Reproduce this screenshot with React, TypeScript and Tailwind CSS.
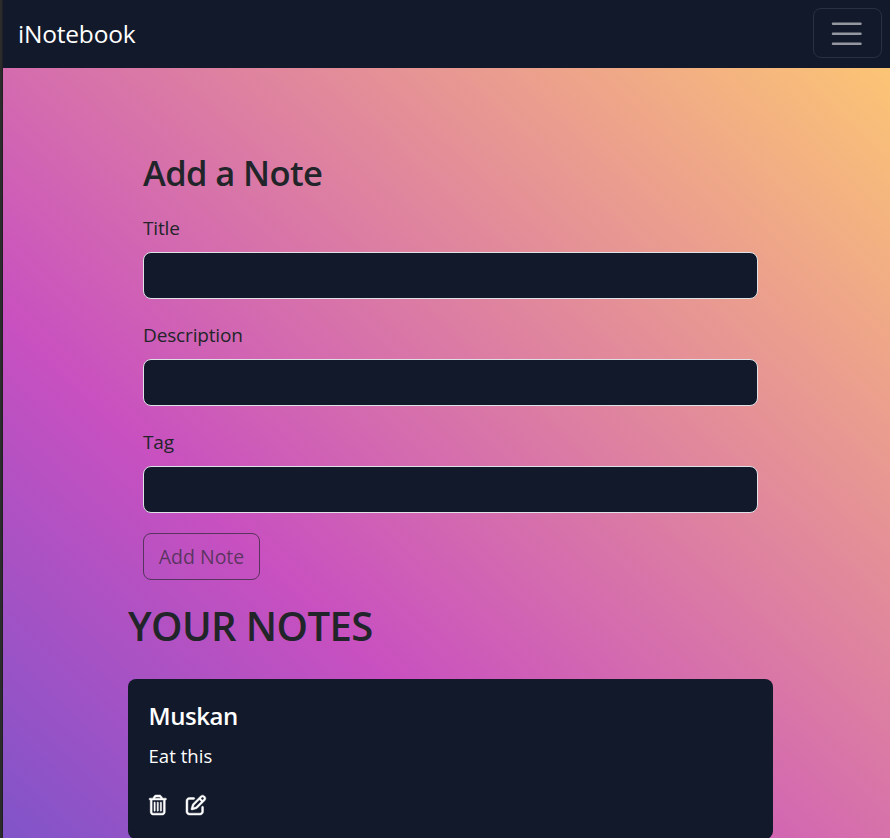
import { FaRegPenToSquare, FaRegTrashCan } from "react-icons/fa6";

function Navbar() {
  return (
    <nav className="flex h-[68px] items-start justify-between bg-[#12192b] pt-2 pr-2 pl-[15px]">
      <a className="mt-[7px] text-[24.5px] leading-[38px] tracking-[-0.2px] text-white">iNotebook</a>
      <button
        aria-label="Toggle navigation"
        className="flex h-[50px] w-[69px] items-center justify-center rounded-[8px] border border-[#2a3041] pt-[2px] pr-[1px]"
      >
        <svg viewBox="0 0 30 30" className="size-[37.5px]" fill="none">
          <path stroke="rgba(255,255,255,0.55)" strokeLinecap="round" strokeMiterlimit="10" strokeWidth="2" d="M4 7h22M4 15h22M4 23h22" />
        </svg>
      </button>
    </nav>
  );
}

function Field({ label }: { label: string }) {
  return (
    <div className="mb-5 flex flex-col">
      <label className="mb-[9px] h-[31px] text-[19px] leading-[33px] font-[370] tracking-[-0.15px] text-[#212529]">
        {label}
      </label>
      <input className="h-[47px] w-full rounded-[8px] border border-[#dee2e6] bg-[#12192b] px-4 text-white outline-none" />
    </div>
  );
}

export default function App() {
  return (
    <div className="flex h-[838px] w-full overflow-hidden bg-[#2b2b2b] font-['Open_Sans','Noto_Sans',sans-serif] text-[#212529]">
      <div className="w-[3px] shrink-0 border-r border-[#202024]" />
      <div className="h-[1294px] grow bg-[linear-gradient(43deg,#4158d0_0%,#c850c0_46%,#ffcc70_100%)]">
        <Navbar />
        <main className="pt-[84px] pr-[117px] pl-[125px]">
          <form className="px-[15px]">
            <h2 className="mb-[20px] h-[40px] text-[34.5px] leading-[41px] font-[560] tracking-[-0.6px]">Add a Note</h2>
            <Field label="Title" />
            <Field label="Description" />
            <Field label="Tag" />
            <button
              disabled
              className="flex h-[47px] w-[117px] items-center justify-center rounded-[8px] border border-[#212529]/65 text-[19.5px] font-[370] text-[#212529]/65"
            >
              Add Note
            </button>
          </form>
          <h1 className="mt-[22px] mb-[29px] h-[48px] text-[40px] leading-[48px] font-[560] tracking-[-0.6px]">YOUR NOTES</h1>
          <article className="h-[160px] rounded-[8px] bg-[#12192b] px-[21px] pt-[21px] text-white">
            <h5 className="-ml-[0.5px] h-[30px] text-[24px] leading-[32px] font-semibold tracking-[-0.45px]">Muskan</h5>
            <p className="mt-[11px] -ml-[0.5px] h-[30px] text-[18.5px] leading-[30px] tracking-[0.05px]">Eat this</p>
            <div className="mt-[24px] flex gap-[20px]">
              <FaRegTrashCan className="-ml-[0.5px] h-5 w-[17.5px] overflow-visible" stroke="currentColor" strokeWidth={12} />
              <FaRegPenToSquare className="size-5 overflow-visible" stroke="currentColor" strokeWidth={12} />
            </div>
          </article>
        </main>
      </div>
    </div>
  );
}
